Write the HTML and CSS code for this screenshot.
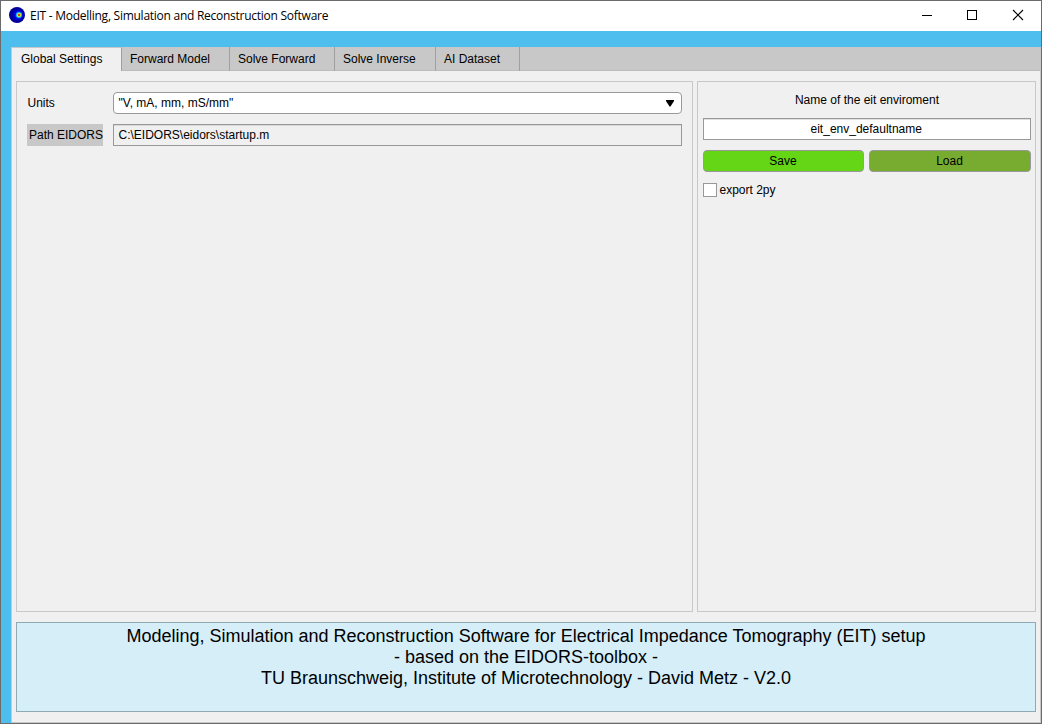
FILE: index.html
```html
<!DOCTYPE html>
<html lang="en">
<head>
<meta charset="utf-8">
<title>EIT - Modelling, Simulation and Reconstruction Software</title>
<link rel="stylesheet" href="styles.css">
</head>
<body>
<div class="window">
  <header class="titlebar">
    <svg class="app-icon" width="16" height="16" viewBox="0 0 16 16">
      <circle cx="8" cy="8" r="8" fill="#00009c"/>
      <circle cx="9" cy="8" r="5.2" fill="#0000d8"/>
      <circle cx="9.8" cy="8" r="3.4" fill="#0048ff"/>
      <circle cx="10" cy="8" r="2.8" fill="#20e0d0"/>
      <circle cx="10" cy="8" r="2" fill="#e8e020"/>
      <circle cx="10" cy="8" r="1.1" fill="#e02000"/>
    </svg>
    <span class="title">EIT - Modelling, Simulation and Reconstruction Software</span>
    <div class="controls">
      <svg width="46" height="30" viewBox="0 0 46 30"><path d="M18 14.500h10" stroke="#000"/></svg>
      <svg width="46" height="30" viewBox="0 0 46 30"><rect x="17.500" y="9.500" width="9" height="9" fill="none" stroke="#000"/></svg>
      <svg width="46" height="30" viewBox="0 0 46 30"><path d="M17 9l10 10M27 9l-10 10" stroke="#000" stroke-width="1.100"/></svg>
    </div>
  </header>
  <main class="frame">
    <div class="content">
      <nav class="tabs">
        <div class="tab tab-active">Global Settings</div>
        <div class="tab tab-forward">Forward Model</div>
        <div class="tab tab-solve">Solve Forward</div>
        <div class="tab tab-inverse">Solve Inverse</div>
        <div class="tab tab-dataset">AI Dataset</div>
      </nav>
      <div class="page">
        <div class="panels">
          <section class="panel settings">
            <div class="row">
              <label class="label">Units</label>
              <div class="dropdown"><span>"V, mA, mm, mS/mm"</span>
                <svg width="8" height="7" viewBox="0 0 8 7"><path d="M0 0h8v1L4.500 6.500h-1L0 1z" fill="#000"/></svg>
              </div>
            </div>
            <div class="row">
              <label class="label label-path">Path EIDORS</label>
              <div class="field field-path">C:\EIDORS\eidors\startup.m</div>
            </div>
          </section>
          <section class="panel environment">
            <div class="caption">Name of the eit enviroment</div>
            <div class="field field-name">eit_env_defaultname</div>
            <div class="buttons">
              <button class="button save">Save</button>
              <button class="button load">Load</button>
            </div>
            <label class="check"><span class="box"></span>export 2py</label>
          </section>
        </div>
        <footer class="about">
          <div>Modeling, Simulation and Reconstruction Software for Electrical Impedance Tomography (EIT) setup</div>
          <div>- based on the EIDORS-toolbox -</div>
          <div>TU Braunschweig, Institute of Microtechnology - David Metz - V2.0</div>
        </footer>
      </div>
    </div>
  </main>
</div>
</body>
</html>
```
FILE: styles.css
```css
* { box-sizing: border-box; }
body { margin: 0; font: 12px/20px "Liberation Sans", Arial, sans-serif; color: #000; }
.window { width: 1042px; height: 724px; border: 1px solid #6b6b6b; display: flex; flex-direction: column; background: #fff; overflow: hidden; }
.titlebar { height: 30px; flex: none; display: flex; align-items: center; padding-left: 8px; }
.app-icon { margin-top: -2px; }
.title { margin-left: 5px; font: 12px/30px "Open Sans", "Noto Sans", sans-serif; letter-spacing: -0.26px; white-space: nowrap; }
.controls { margin: 0 -1px 0 auto; display: flex; }
.controls svg { display: block; }
.frame { flex: 1; background: #4dbeee; padding: 16px 0 0 10px; display: flex; }
.content { flex: 1; display: flex; flex-direction: column; background: #f0f0f0; border: solid #c8c8c8; border-width: 0 1px 1px; }
.tabs { height: 24px; display: flex; background: #c8c8c8; border-bottom: 1px solid #bcbcbc; }
.tab { height: 24px; padding-left: 8px; line-height: 25px; border-right: 1px solid #a0a0a0; white-space: nowrap; }
.tab-active { width: 110px; padding-left: 9px; line-height: 23px; background: #f0f0f0; border-top: 1px solid #c8c8c8; }
.tab-forward { width: 108px; }
.tab-solve { width: 105px; }
.tab-inverse { width: 101px; }
.tab-dataset { width: 84px; }
.page { flex: 1; padding: 10px 4px; display: flex; flex-direction: column; gap: 10px; }
.panels { height: 531px; display: flex; gap: 4px; }
.panel { border: 1px solid #c8c8c8; }
.settings { width: 677px; padding: 10px; display: flex; flex-direction: column; gap: 10px; }
.row { height: 22px; display: flex; gap: 10px; }
.label { width: 76px; line-height: 22px; padding-left: 0.5px; white-space: nowrap; }
.label-path { background: #c8c8c8; padding-left: 2px; }
.dropdown, .field { height: 22px; border: 1px solid #999; padding: 0 4.5px; background: #fff; }
.dropdown { flex: 1; display: flex; align-items: center; justify-content: space-between; border-radius: 4px; padding-right: 7px; }
.field { box-shadow: inset 0 1px 0 #e0e0e0; }
.field-path { flex: 1; background: #f0f0f0; box-shadow: inset 0 1px 0 #d8d8d8; }
.environment { flex: 1; padding: 8px 4px 0 5px; }
.caption, .field-name { text-align: center; }
.caption { margin-bottom: 8px; }
.field-name { padding-right: 6px; }
.buttons { display: grid; grid-template-columns: 161px 162px; gap: 5px; margin-top: 10px; }
.button { height: 22px; border: 1px solid #999; border-radius: 4px; font: inherit; line-height: 20px; color: #000; padding: 0 1px 0 0; }
.save { background: #65d615; }
.load { background: #77ac30; }
.check { display: flex; align-items: center; gap: 2.5px; margin-top: 8px; }
.box { width: 14px; height: 14px; border: 1px solid #999; background: #fff; }
.about { height: 90px; border: 1px solid #8eaab6; background: #d5eef8; padding-top: 3px; text-align: center; font-size: 18px; line-height: 21px; }
```
